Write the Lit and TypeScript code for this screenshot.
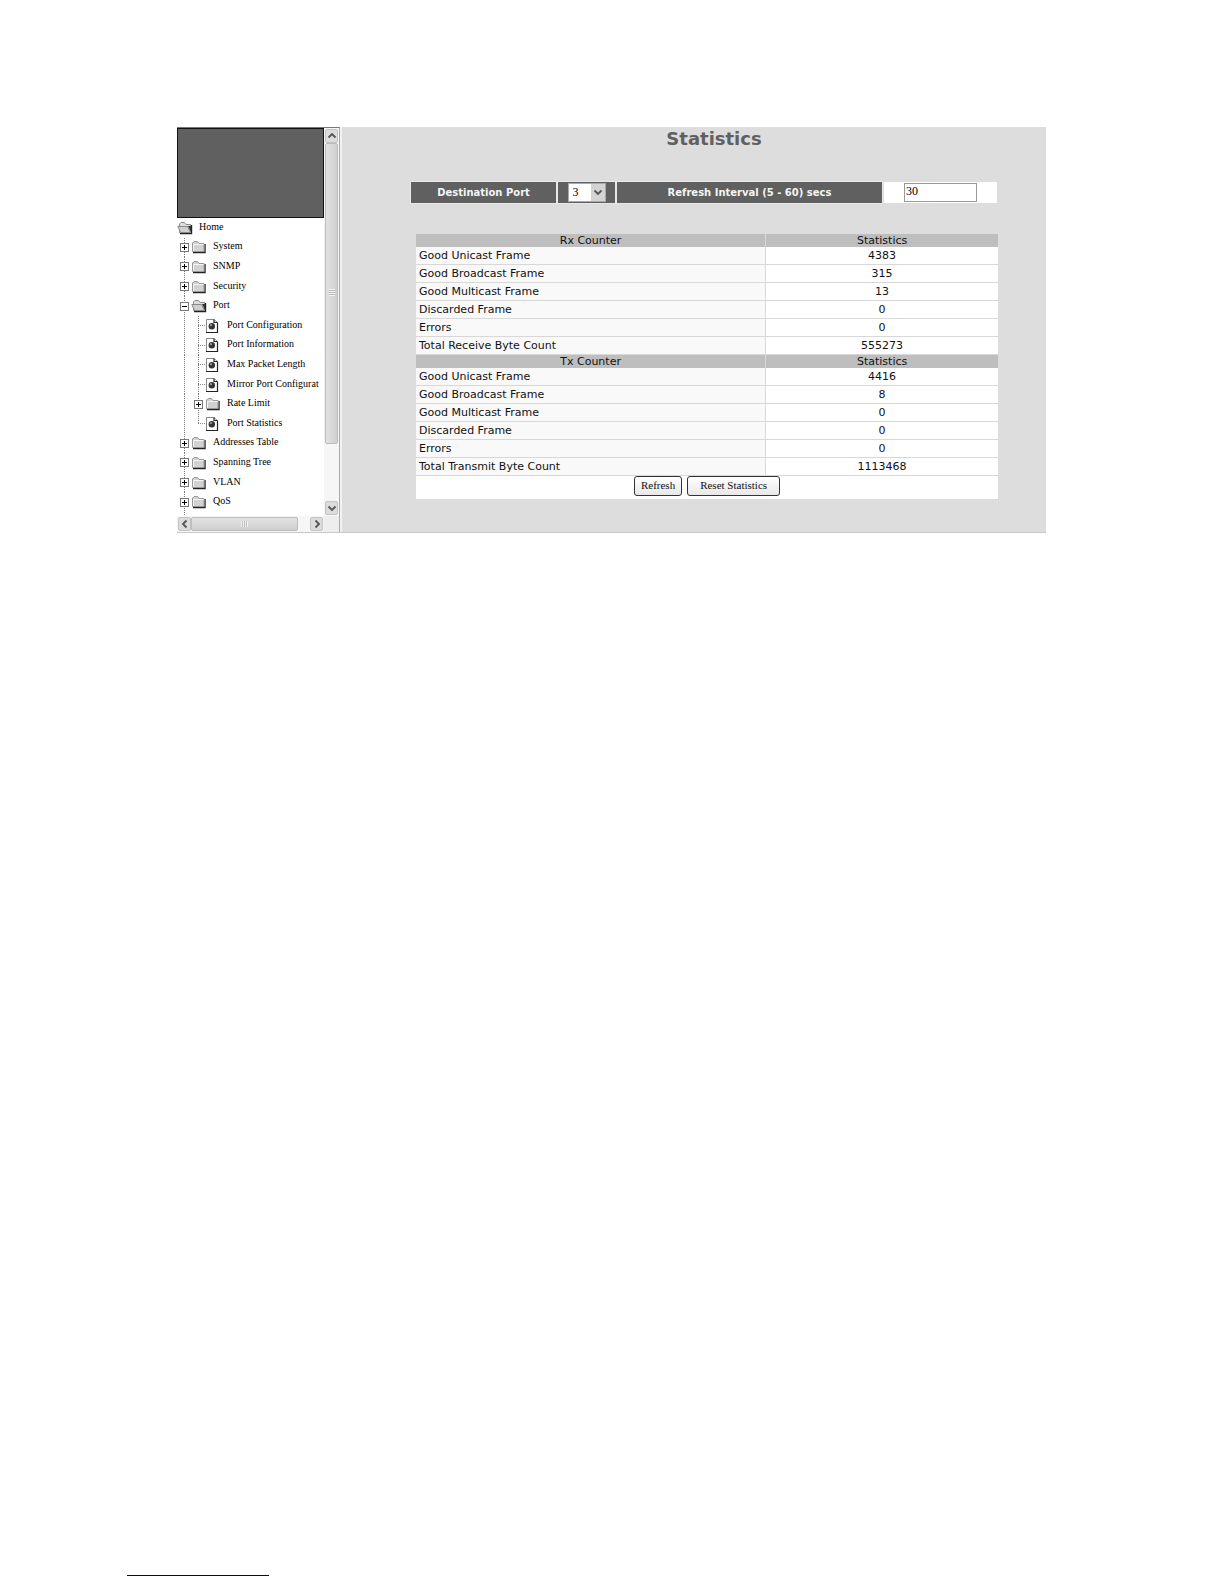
import { LitElement, html, css, svg } from "lit";
import { customElement, property, state } from "lit/decorators.js";

type Kind = "open" | "folder" | "page";
interface TreeItem {
  label: string;
  level: number;
  kind: Kind;
  toggle?: "plus" | "minus";
  last?: boolean;
}

const TREE: TreeItem[] = [
  { label: "Home", level: 0, kind: "open" },
  { label: "System", level: 1, kind: "folder", toggle: "plus" },
  { label: "SNMP", level: 1, kind: "folder", toggle: "plus" },
  { label: "Security", level: 1, kind: "folder", toggle: "plus" },
  { label: "Port", level: 1, kind: "open", toggle: "minus" },
  { label: "Port Configuration", level: 2, kind: "page" },
  { label: "Port Information", level: 2, kind: "page" },
  { label: "Max Packet Length", level: 2, kind: "page" },
  { label: "Mirror Port Configurat", level: 2, kind: "page" },
  { label: "Rate Limit", level: 2, kind: "folder", toggle: "plus" },
  { label: "Port Statistics", level: 2, kind: "page", last: true },
  { label: "Addresses Table", level: 1, kind: "folder", toggle: "plus" },
  { label: "Spanning Tree", level: 1, kind: "folder", toggle: "plus" },
  { label: "VLAN", level: 1, kind: "folder", toggle: "plus" },
  { label: "QoS", level: 1, kind: "folder", toggle: "plus" },
];

const RX: [string, string][] = [
  ["Good Unicast Frame", "4383"],
  ["Good Broadcast Frame", "315"],
  ["Good Multicast Frame", "13"],
  ["Discarded Frame", "0"],
  ["Errors", "0"],
  ["Total Receive Byte Count", "555273"],
];

const TX: [string, string][] = [
  ["Good Unicast Frame", "4416"],
  ["Good Broadcast Frame", "8"],
  ["Good Multicast Frame", "0"],
  ["Discarded Frame", "0"],
  ["Errors", "0"],
  ["Total Transmit Byte Count", "1113468"],
];

const shapes: Record<Kind, unknown> = {
  folder: svg`
    <path d="M2 13.5H14V5" fill="none" stroke="#222" stroke-width="1.4"/>
    <path d="M1.5 12.5V4L3 2.5H6.5L8 4.5H13V12.5Z" fill="#d2d2d2" stroke="#999"/>
    <path d="M2.5 12V5.5H12.5" fill="none" stroke="#f4f4f4"/>`,
  open: svg`
    <path d="M3 13.5H14.5V5" fill="none" stroke="#222" stroke-width="1.4"/>
    <path d="M2.5 12.5V4L4 2.5H7.5L9 4.5H13.5V12.5Z" fill="#dedede" stroke="#888"/>
    <path d="M0.8 6.5H10.5L13.5 12.5H3.5Z" fill="#cfcfcf" stroke="#888"/>
    <path d="M11 6L14 12V6Z" fill="#333"/>`,
  page: svg`
    <path d="M1.5 1.5H9L12.5 4.5V14.5H1.5Z" fill="#fff" stroke="#888"/>
    <path d="M1 14.5H12.5V5M9 1.5V4.5H12.5" fill="none" stroke="#222" stroke-width="1.2"/>
    <circle cx="6.8" cy="8.3" r="3.2" fill="#333"/>
    <circle cx="6" cy="7.2" r="1.1" fill="#999"/>`,
};

@customElement("nav-tree")
export class NavTree extends LitElement {
  static styles = css`
    :host { display: flex; flex-direction: column; min-height: 0; overflow: hidden; }
    .list { list-style: none; margin: 0; padding: 0; flex: 1; display: flex; flex-direction: column; }
    .row { flex: 1; display: flex; align-items: center; white-space: nowrap; }
    .cell { width: 14px; flex: none; align-self: stretch; display: grid; place-items: center; }
    .line {
      background: repeating-linear-gradient(#777 0 1px, transparent 1px 2px) 7px 0 / 1px 100% no-repeat;
    }
    .line.end { background-size: 1px 50%; }
    .branch { width: 7px; height: 1px; justify-self: end;
      background: repeating-linear-gradient(90deg, #888 0 1px, transparent 1px 2px); }
    .toggle { width: 9px; height: 9px; padding: 0; border: 0; background: none; display: block; margin-left: 1px; }
    .glyph { display: block; }
    .icon { width: 16px; height: 16px; flex: none; }
    .link { color: #000; text-decoration: none; padding: 0 0 2px 6px; font: 10px/16px "Liberation Serif", serif; }
    .tail { height: 4px; width: 14px; flex: none; }
  `;

  private junction(item: TreeItem) {
    if (item.level === 0) return "";
    return html`<span class="cell line ${item.last ? "end" : ""}">
      ${item.toggle
        ? html`<button class="toggle" aria-label="Toggle ${item.label}">
            <svg class="glyph" width="9" height="9" viewBox="0 0 9 9">
              <rect x="0.5" y="0.5" width="8" height="8" fill="#fff" stroke="#777"/>
              <path d=${item.toggle === "plus" ? "M2 4.5H7M4.5 2V7" : "M2 4.5H7"} stroke="#000"/>
            </svg></button>`
        : html`<span class="branch"></span>`}
    </span>`;
  }

  render() {
    return html`
      <ul class="list">
        ${TREE.map((item) => html`
          <li class="row">
            ${item.level === 2 ? html`<span class="cell line"></span>` : ""}
            ${this.junction(item)}
            <svg class="icon" viewBox="0 0 16 16" aria-hidden="true">${shapes[item.kind]}</svg>
            <a class="link" href="#">${item.label}</a>
          </li>`)}
      </ul>
      <div class="tail line"></div>`;
  }
}

@customElement("scroll-bar")
export class ScrollBar extends LitElement {
  @property({ reflect: true }) direction = "vertical";

  static styles = css`
    :host { display: flex; flex-direction: column; background: #f6f6f6; padding: 1px; }
    :host([direction="horizontal"]) { flex-direction: row; }
    .end {
      width: 13px; height: 14px; flex: none; padding: 0; display: grid; place-items: center;
      background: #dcdcdc; border: 1px solid #c4c4c4; border-radius: 2px; box-sizing: border-box;
    }
    .thumb {
      flex: 302; display: grid; place-items: center; box-sizing: border-box;
      background: linear-gradient(90deg, #e2e2e2, #cfcfcf); border: 1px solid #bcbcbc; border-radius: 2px;
    }
    .rest { flex: 58; }
    :host([direction="horizontal"]) .thumb { flex: 106; background: linear-gradient(#e2e2e2, #cfcfcf); }
    :host([direction="horizontal"]) .rest { flex: 12; }
  `;

  render() {
    const flat = this.direction === "horizontal";
    const back = flat ? "M6.5 1.5L3 5L6.5 8.5" : "M1.5 6.5L5 3L8.5 6.5";
    const forth = flat ? "M3.5 1.5L7 5L3.5 8.5" : "M1.5 3.5L5 7L8.5 3.5";
    const arrow = (d: string) =>
      html`<svg width="10" height="10" viewBox="0 0 10 10"><path d=${d} fill="none" stroke="#555" stroke-width="1.8"/></svg>`;
    return html`
      <button class="end" aria-label="Scroll back">${arrow(back)}</button>
      <div class="thumb">
        <svg width="8" height="8" viewBox="0 0 8 8">
          <path d=${flat ? "M0.5 1V7M2.5 1V7M4.5 1V7M6.5 1V7" : "M1 0.5H7M1 2.5H7M1 4.5H7M1 6.5H7"} stroke="#f4f4f4"/>
          <path d=${flat ? "M1.5 1V7M3.5 1V7M5.5 1V7" : "M1 1.5H7M1 3.5H7M1 5.5H7"} stroke="#bbb"/>
        </svg>
      </div>
      <div class="rest"></div>
      <button class="end" aria-label="Scroll forward">${arrow(forth)}</button>`;
  }
}

@customElement("app-root")
export class AppRoot extends LitElement {
  @state() private port = "3";

  static styles = css`
    :host { display: block; }
    .page {
      min-height: 100vh; box-sizing: border-box; background: #fff;
      display: flex; flex-direction: column; padding: 127px 178px 8px 177px;
      font-family: "DejaVu Sans", sans-serif;
    }
    .frame { display: flex; border-bottom: 1px solid #c8c8c8; }
    .side {
      width: 163px; box-sizing: border-box; flex: none; display: grid; grid-template-columns: minmax(0, 1fr) 15px;
      grid-template-rows: minmax(0, 1fr) 16px; border-top: 1px solid #777;
      border-right: 1px solid #aaa; background: #fff;
    }
    .view { display: flex; flex-direction: column; min-height: 0; }
    .banner { height: 90px; flex: none; box-sizing: border-box; background: #606060; border: 1px solid #111; }
    .tree { flex: 1; }
    .corner { background: #eee; }
    .main { flex: 1; min-width: 0; background: #ddd; border-left: 2px solid #f2f2f2; padding-bottom: 33px; }
    .title { margin: 0 0 31px; padding-left: 40px; text-align: center; color: #606060; font-size: 18px; line-height: 24px; font-weight: bold; }
    .bar {
      display: grid; grid-template-columns: 145fr 57px 265fr 113fr; gap: 2px;
      margin: 0 49px 31px 69px; height: 21px;
      color: #f4f4f4; font-size: 10px; font-weight: bold;
    }
    .cell { background: #606060; display: grid; place-items: center; outline: 1px solid #e8e8e8; min-width: 0; white-space: nowrap; }
    .cell.plain { background: #fff; outline: none; }
    .pick { position: relative; width: 38px; height: 19px; }
    .select {
      appearance: none; width: 100%; height: 100%; margin: 0; padding: 0 0 2px 4px; display: block;
      background: #fff; border: 1px solid #aaa; border-radius: 0; color: #000;
      font: 12px "Liberation Serif", serif;
    }
    .arrow { position: absolute; right: 1px; top: 1px; pointer-events: none; }
    .field {
      box-sizing: border-box; width: 73px; height: 19px; padding: 0 0 3px 1px; border: 1px solid #999;
      background: #fff; color: #000; font: 12px "Liberation Serif", serif;
    }
    .panel { margin: 0 48px 0 74px; background: #fff; }
    .table { width: 100%; border-collapse: separate; border-spacing: 0; table-layout: fixed; color: #111; font-size: 11px; line-height: 13px; }
    .name { width: 60%; }
    .head { padding: 0; height: 13px; background: #bebebe; font-weight: normal; text-align: center; }
    .label, .value { box-sizing: border-box; height: 18px; padding: 0 3px; border-bottom: 1px solid #d8d8d8; font-weight: normal; }
    .label { text-align: left; background: #f9f9f9; }
    .value { text-align: center; }
    .name, .label { border-right: 1px solid #d8d8d8; }
    .actions { display: flex; gap: 5px; justify-content: center; padding-bottom: 3px; }
    .button {
      height: 20px; box-sizing: border-box; padding: 0 6px 3px; border: 1px solid #333; border-radius: 3px;
      background: linear-gradient(#fff, #e8e8e8); color: #111; font: 11px "Liberation Serif", serif;
    }
    .button.wide { padding: 0 12px 3px; }
    .foot { margin: auto 0 0 -50px; width: 142px; border-bottom: 1px solid #000080; }
  `;

  private group(name: string, rows: [string, string][]) {
    return html`<tbody>
      <tr><th class="head name" scope="col">${name}</th><th class="head" scope="col">Statistics</th></tr>
      ${rows.map(([label, value]) => html`
        <tr><th class="label" scope="row">${label}</th><td class="value">${value}</td></tr>`)}
    </tbody>`;
  }

  render() {
    return html`
      <div class="page">
        <div class="frame">
          <nav class="side">
            <div class="view">
              <div class="banner"></div>
              <nav-tree class="tree"></nav-tree>
            </div>
            <scroll-bar direction="vertical"></scroll-bar>
            <scroll-bar direction="horizontal"></scroll-bar>
            <div class="corner"></div>
          </nav>
          <main class="main">
            <h1 class="title">Statistics</h1>
            <div class="bar">
              <label class="cell" for="port">Destination Port</label>
              <div class="cell">
                <div class="pick">
                  <select class="select" id="port" .value=${this.port}
                    @change=${(e: Event) => (this.port = (e.target as HTMLSelectElement).value)}>
                    ${["1", "2", "3", "4"].map((p) => html`<option ?selected=${p === this.port}>${p}</option>`)}
                  </select>
                  <svg class="arrow" width="14" height="17" viewBox="0 0 14 17" aria-hidden="true">
                    <rect width="14" height="17" fill="#d4d4d4"/>
                    <path d="M3.5 6.5L7 10L10.5 6.5" fill="none" stroke="#555" stroke-width="1.8"/>
                  </svg>
                </div>
              </div>
              <label class="cell" for="interval">Refresh Interval (5 - 60) secs</label>
              <div class="cell plain"><input class="field" id="interval" type="text" value="30"></div>
            </div>
            <div class="panel">
              <table class="table">
                ${this.group("Rx Counter", RX)}
                ${this.group("Tx Counter", TX)}
              </table>
              <div class="actions">
                <button class="button">Refresh</button>
                <button class="button wide">Reset Statistics</button>
              </div>
            </div>
          </main>
        </div>
        <footer class="foot"></footer>
      </div>`;
  }
}
